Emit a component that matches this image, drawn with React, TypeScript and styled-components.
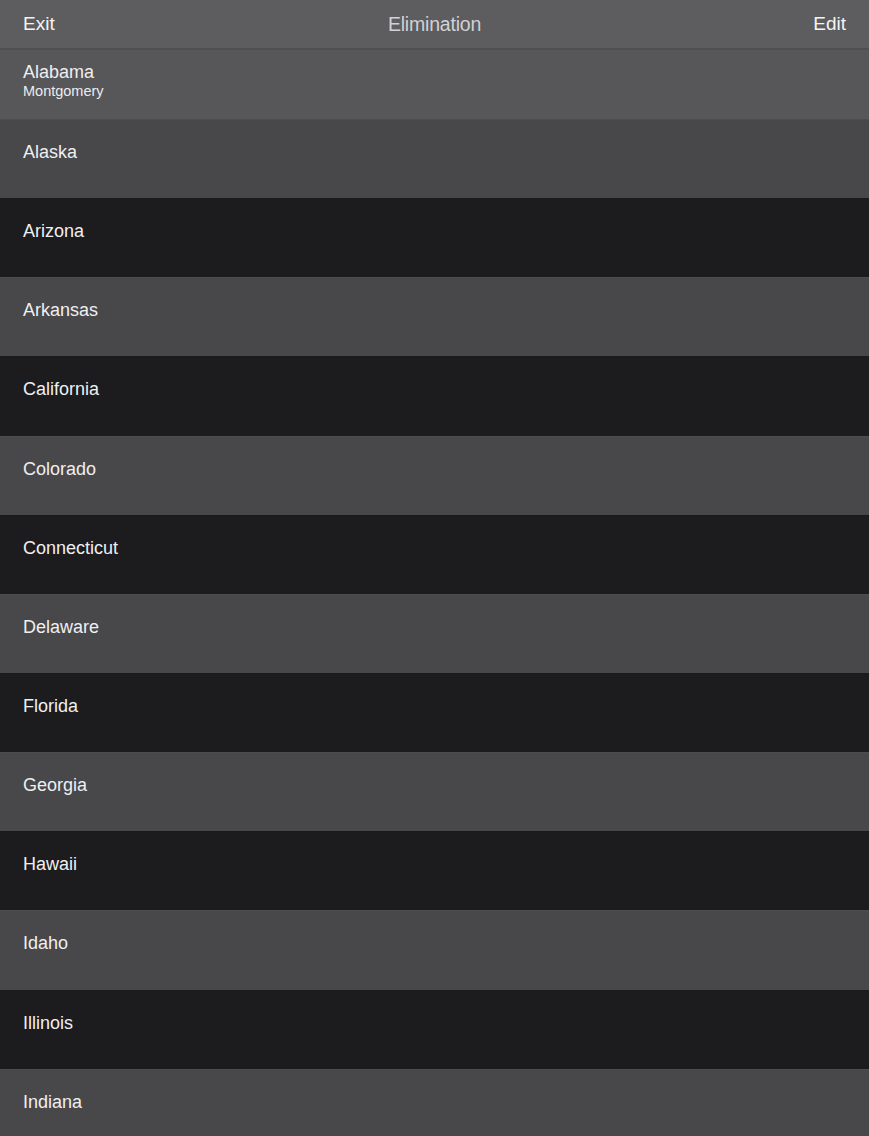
import styled, { createGlobalStyle } from 'styled-components'

const GlobalStyle = createGlobalStyle`
  html, body {
    margin: 0;
    padding: 0;
    background: #1c1b1e;
    overflow: hidden;
  }
  body {
    font-family: "Liberation Sans", Arial, sans-serif;
    -webkit-font-smoothing: antialiased;
  }
`

const Screen = styled.div`
  width: 869px;
  height: 1136px;
  display: flex;
  flex-direction: column;
  overflow: hidden;
  background: #48474a;
`

const NavBar = styled.div`
  height: 48px;
  flex: none;
  display: grid;
  grid-template-columns: 1fr auto 1fr;
  align-items: center;
  padding: 0 23px;
  background: #5d5c5f;
  border-bottom: 2px solid #4f4e51;
`

const NavButton = styled.span<{ $right?: boolean }>`
  font-size: 19px;
  color: #f4f4f5;
  justify-self: ${p => (p.$right ? 'end' : 'start')};
`

const Title = styled.span`
  font-size: 19.5px;
  color: #d2d1d3;
  letter-spacing: -0.2px;
`

const List = styled.div`
  display: flex;
  flex-direction: column;
`

const Row = styled.div<{ $tone: 'selected' | 'light' | 'dark' }>`
  flex: none;
  box-sizing: border-box;
  height: ${p => (p.$tone === 'selected' ? '69px' : '79.15px')};
  padding: ${p => (p.$tone === 'selected' ? '10px' : '21px')} 23px 0;
  background: ${p =>
    p.$tone === 'selected' ? '#575659' : p.$tone === 'light' ? '#48474a' : '#1c1b1e'};
  border-top: 1px solid
    ${p => (p.$tone === 'selected' ? '#59585b' : p.$tone === 'light' ? '#4d4c4f' : '#1a191c')};
  color: #efeff0;
`

const Name = styled.div`
  font-size: 18px;
  line-height: 22px;
`

const Capital = styled.div`
  font-size: 14.5px;
  line-height: 16px;
  color: #ececed;
`

const states = [
  'Alaska',
  'Arizona',
  'Arkansas',
  'California',
  'Colorado',
  'Connecticut',
  'Delaware',
  'Florida',
  'Georgia',
  'Hawaii',
  'Idaho',
  'Illinois',
  'Indiana',
]

export default function App() {
  return (
    <Screen>
      <GlobalStyle />
      <NavBar>
        <NavButton>Exit</NavButton>
        <Title>Elimination</Title>
        <NavButton $right>Edit</NavButton>
      </NavBar>
      <List>
        <Row $tone="selected">
          <Name>Alabama</Name>
          <Capital>Montgomery</Capital>
        </Row>
        {states.map((s, i) => (
          <Row key={s} $tone={i % 2 === 0 ? 'light' : 'dark'}>
            <Name>{s}</Name>
          </Row>
        ))}
      </List>
    </Screen>
  )
}
